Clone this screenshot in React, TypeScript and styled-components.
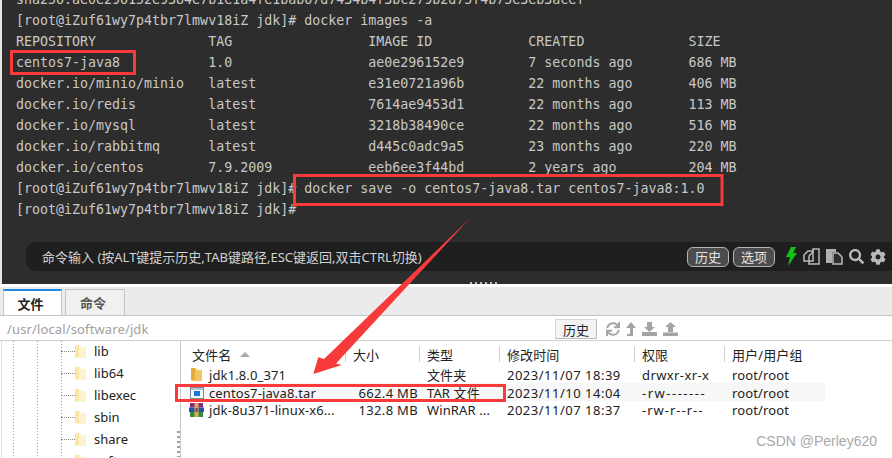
import React from "react";
import styled, { createGlobalStyle } from "styled-components";
import { FaCog, FaSearch, FaSync } from "react-icons/fa";

const Global = createGlobalStyle`
  html, body { margin: 0; padding: 0; background: #fff; }
  #root { width: 892px; height: 458px; overflow: hidden; }
`;

const UI_FONT = `"Noto Sans", "Noto Sans CJK SC", sans-serif`;

const Page = styled.div`
  position: relative;
  width: 892px;
  height: 458px;
  overflow: hidden;
  display: flex;
  flex-direction: column;
  background: #fff;
  font-family: ${UI_FONT};
`;

const Terminal = styled.section`
  height: 284px;
  flex: none;
  border-left: 2px solid #e6e6e6;
  background: #2d2d2d;
  overflow: hidden;
  position: relative;
  display: flex;
  flex-direction: column;
`;

const Output = styled.pre`
  margin: -11px 0 0 14px;
  font-family: "DejaVu Sans Mono", monospace;
  font-size: 13.3px;
  line-height: 21px;
  color: #c8c8c8;
  height: 231px;
  flex: none;
  overflow: hidden;
`;

const InputBar = styled.div`
  margin: 22px 0 0 24px;
  height: 29px;
  display: flex;
  align-items: center;
  background: #1f1f1f;
  border-radius: 10px 0 0 10px;
  padding: 0 6px 0 16px;
  color: #d2d2d2;
  font-size: 13px;
`;

const Hint = styled.span`
  flex: 1;
`;

const PillButton = styled.span`
  width: 42px;
  height: 20px;
  box-sizing: border-box;
  border: 1px solid #b5b5b5;
  border-radius: 6px;
  background: #4c4c4c;
  color: #e4e4e4;
  font-size: 13px;
  display: flex;
  align-items: center;
  justify-content: center;
  margin-left: 4px;
`;

const ToolIcons = styled.div`
  display: flex;
  align-items: center;
  gap: 6px;
  margin-left: 10px;
  color: #b9b9b9;
`;

const SplitDots = styled.div`
  position: absolute;
  left: 468px;
  bottom: 0;
  width: 30px;
  height: 2px;
  background: repeating-linear-gradient(90deg, #bdbdbd 0 2px, transparent 2px 5px);
`;

const TabStrip = styled.div`
  margin-top: 3px;
  height: 29px;
  flex: none;
  box-sizing: border-box;
  background: #ebebeb;
  border-bottom: 1px solid #c4c4c4;
  display: flex;
  align-items: flex-end;
  gap: 3px;
  padding-left: 3px;
`;

const Tab = styled.div<{ $active?: boolean }>`
  width: ${(p) => (p.$active ? 59 : 60)}px;
  height: 26px;
  box-sizing: border-box;
  display: flex;
  align-items: center;
  justify-content: center;
  padding-right: 4px;
  font-size: 13px;
  font-weight: 700;
  color: ${(p) => (p.$active ? "#222" : "#555")};
  background: ${(p) => (p.$active ? "#fff" : "#f0f0f0")};
  border: 1px solid #c4c4c4;
  border-bottom: none;
  border-top: ${(p) => (p.$active ? "2px solid #1e8ae6" : "1px solid #c4c4c4")};
`;

const PathRow = styled.div`
  height: 25px;
  flex: none;
  box-sizing: border-box;
  border-bottom: 1px solid #cfcfcf;
  display: flex;
  align-items: center;
  padding: 2px 0 0 7px;
`;

const PathText = styled.span`
  flex: none;
  width: 548px;
  color: #a0a0a0;
  font-size: 13px;
  letter-spacing: 0.13px;
`;

const HistoryButton = styled.span`
  width: 42px;
  height: 20px;
  box-sizing: border-box;
  background: #f4f4f4;
  border: 1px solid #d8d8d8;
  border-bottom-color: #bbb;
  border-right-color: #bbb;
  color: #222;
  font-size: 13px;
  display: flex;
  align-items: center;
  justify-content: center;
`;

const PathIcons = styled.div`
  display: flex;
  align-items: center;
  gap: 6px;
  margin-left: 9px;
  color: #a4a4a4;
`;

const Body = styled.div`
  flex: 1;
  display: flex;
  min-height: 0;
`;

const Tree = styled.div`
  position: relative;
  margin-left: 1px;
  width: 180px;
  flex: none;
  box-sizing: border-box;
  border-left: 1px solid #dcdcdc;
  border-right: 1px solid #c8c8c8;
  padding: 0 0 0 59px;
  overflow: hidden;
  background-image:
    repeating-linear-gradient(180deg, #9a9a9a 0 1px, transparent 1px 3px),
    repeating-linear-gradient(180deg, #9a9a9a 0 1px, transparent 1px 3px),
    repeating-linear-gradient(180deg, #9a9a9a 0 1px, transparent 1px 3px);
  background-size: 1px 100%;
  background-repeat: no-repeat;
  background-position: 11px 0, 35px 0, 59px 0;
`;

const TreeRow = styled.div`
  height: 22px;
  display: flex;
  align-items: center;
  font-size: 13px;
  color: #222;
`;

const TreeList = styled.div`
  margin-top: -1px;
`;

const Connector = styled.span`
  width: 14px;
  flex: none;
  border-top: 1px dotted #888;
`;

const TreeLabel = styled.span`
  margin-left: 8px;
`;

const Grips = styled.div`
  position: absolute;
  right: 0;
  top: 90px;
  width: 3px;
  height: 26px;
  background: repeating-linear-gradient(180deg, #a0a0a0 0 2px, transparent 2px 5px);
`;

const Files = styled.div`
  margin-left: 3px;
  width: 641px;
  font-size: 13px;
  color: #222;
  letter-spacing: 0.12px;
`;

const Grid = "161px 74px 80px 135px 90px 101px";

const HeadRow = styled.div`
  display: grid;
  grid-template-columns: ${Grid};
  height: 22px;
  margin-top: 2px;
  align-items: center;
`;

const HeadCell = styled.div<{ $first?: boolean }>`
  height: 16px;
  display: flex;
  align-items: center;
  gap: 9px;
  padding-left: ${(p) => (p.$first ? 8 : 7)}px;
  border-left: ${(p) => (p.$first ? "none" : "1px solid #cfcfcf")};
  white-space: nowrap;
`;

const SortMark = styled.span`
  width: 0;
  height: 0;
  border-left: 5px solid transparent;
  border-right: 5px solid transparent;
  border-bottom: 5px solid #aaa;
`;

const FileRow = styled.div<{ $striped?: boolean }>`
  display: grid;
  grid-template-columns: ${Grid};
  height: 18px;
  box-sizing: border-box;
  padding-bottom: 2px;
  align-items: center;
  background: ${(p) => (p.$striped ? "#f7f7f7" : "transparent")};
  white-space: nowrap;
`;

const NameCell = styled.div`
  display: flex;
  align-items: center;
  gap: 5px;
  padding-left: 5px;
`;

const IconSlot = styled.span`
  width: 15px;
  height: 14px;
  flex: none;
  display: flex;
  align-items: center;
  justify-content: center;
`;

const SizeCell = styled.div`
  text-align: right;
  padding-right: 1px;
  letter-spacing: 0.32px;
`;

const Cell = styled.div<{ $spacing?: number }>`
  padding-left: 8px;
  letter-spacing: ${(p) => p.$spacing ?? 0.12}px;
`;

const Overlay = styled.svg`
  position: absolute;
  left: 0;
  top: 0;
  pointer-events: none;
`;

const Watermark = styled.div`
  position: absolute;
  right: 15px;
  bottom: 9px;
  font-family: "Liberation Sans", sans-serif;
  font-size: 14px;
  color: #a8a8a8;
`;

const OUTPUT = `sha256:ae0e296152e9384e7b1e1a4fe1bab67d7434b4f3bc279b2d75f4b75e3eb3acef
[root@iZuf61wy7p4tbr7lmwv18iZ jdk]# docker images -a
REPOSITORY              TAG                 IMAGE ID            CREATED             SIZE
centos7-java8           1.0                 ae0e296152e9        7 seconds ago       686 MB
docker.io/minio/minio   latest              e31e0721a96b        22 months ago       406 MB
docker.io/redis         latest              7614ae9453d1        22 months ago       113 MB
docker.io/mysql         latest              3218b38490ce        22 months ago       516 MB
docker.io/rabbitmq      latest              d445c0adc9a5        23 months ago       220 MB
docker.io/centos        7.9.2009            eeb6ee3f44bd        2 years ago         204 MB
[root@iZuf61wy7p4tbr7lmwv18iZ jdk]# docker save -o centos7-java8.tar centos7-java8:1.0
[root@iZuf61wy7p4tbr7lmwv18iZ jdk]#`;

const Folder = ({ pale }: { pale?: boolean }) => (
  <svg width="11" height="15" viewBox="0 0 11 15">
    <path d="M0 1h5l1 2h5v11H1l-1-1z" fill={pale ? "#fdf3cf" : "#f2c763"} />
    <path d="M0 1h4v12H0z" fill={pale ? "#f9e6a8" : "#e5ac3a"} />
  </svg>
);

const TarIcon = () => (
  <svg width="14" height="12" viewBox="0 0 14 12">
    <rect x=".5" y=".5" width="13" height="11" fill="#f4f6f8" stroke="#7e8b97" />
    <rect x="1" y="1" width="12" height="2" fill="#b9c3cc" />
    <rect x="4" y="4" width="6" height="5" fill="#1677dd" />
  </svg>
);

const RarIcon = () => (
  <svg width="15" height="14" viewBox="0 0 15 14">
    <rect x="1" y="0" width="13" height="4.5" fill="#8c2a7a" />
    <rect x="0" y="4.5" width="15" height="4.5" fill="#2a4fa8" />
    <rect x="1" y="9" width="13" height="5" fill="#2f8f3a" />
    <rect x="5.5" y="0" width="4" height="14" fill="#d8a860" />
    <rect x="6.5" y="5" width="2" height="4" fill="#7a4a20" />
  </svg>
);

const Bolt = () => (
  <svg width="12" height="19" viewBox="0 0 12 19">
    <path d="M6 0h5L8 6h4L3 19l2-9H1z" fill="#14c414" />
  </svg>
);

const CopyIcon = () => (
  <svg width="17" height="17" viewBox="0 0 17 17" fill="none" stroke="#b9b9b9" strokeWidth="1.5">
    <path d="M1 7l4-4h5v10H1z" />
    <path d="M6 8l4-4V1h6v15H6z" />
  </svg>
);

const PasteIcon = () => (
  <svg width="17" height="17" viewBox="0 0 17 17">
    <path d="M0 1h10v3H6v11H0z" fill="#b0b0b0" />
    <path d="M7 5h5l4 4v7H7z" fill="#2d2d2d" stroke="#b9b9b9" strokeWidth="1.5" />
  </svg>
);

const UpArrow = () => (
  <svg width="10" height="14" viewBox="0 0 10 14">
    <path d="M5 0l5 6H7v8H1v-2h3V6H0z" fill="#a4a4a4" />
  </svg>
);

const TrayDown = () => (
  <svg width="15" height="14" viewBox="0 0 15 14">
    <path d="M5 0h5v5h3l-5.5 5L2 5h3z" fill="#a4a4a4" />
    <rect x="0" y="10" width="15" height="4" fill="#a4a4a4" />
  </svg>
);

const TrayUp = () => (
  <svg width="15" height="14" viewBox="0 0 15 14">
    <path d="M7.5 0L13 5h-3v5H5V5H2z" fill="#a4a4a4" />
    <rect x="0" y="10.5" width="15" height="3.5" fill="#a4a4a4" />
  </svg>
);

const treeItems = ["lib", "lib64", "libexec", "sbin", "share", "soft"];

export default function App() {
  return (
    <Page>
      <Global />
      <Terminal>
        <Output>{OUTPUT}</Output>
        <InputBar>
          <Hint>命令输入 (按ALT键提示历史,TAB键路径,ESC键返回,双击CTRL切换)</Hint>
          <PillButton>历史</PillButton>
          <PillButton>选项</PillButton>
          <ToolIcons>
            <Bolt />
            <CopyIcon />
            <PasteIcon />
            <FaSearch size={15} />
            <FaCog size={16} />
          </ToolIcons>
        </InputBar>
        <SplitDots />
      </Terminal>
      <TabStrip>
        <Tab $active>文件</Tab>
        <Tab>命令</Tab>
      </TabStrip>
      <PathRow>
        <PathText>/usr/local/software/jdk</PathText>
        <HistoryButton>历史</HistoryButton>
        <PathIcons>
          <FaSync size={14} />
          <UpArrow />
          <TrayDown />
          <TrayUp />
        </PathIcons>
      </PathRow>
      <Body>
        <Tree>
          <TreeList>
            {treeItems.map((t) => (
              <TreeRow key={t}>
                <Connector />
                <Folder pale />
                <TreeLabel>{t}</TreeLabel>
              </TreeRow>
            ))}
          </TreeList>
          <Grips />
        </Tree>
        <Files>
          <HeadRow>
            <HeadCell $first>
              文件名
              <SortMark />
            </HeadCell>
            <HeadCell>大小</HeadCell>
            <HeadCell>类型</HeadCell>
            <HeadCell>修改时间</HeadCell>
            <HeadCell>权限</HeadCell>
            <HeadCell>用户/用户组</HeadCell>
          </HeadRow>
          <FileRow>
            <NameCell>
              <IconSlot>
                <Folder />
              </IconSlot>
              jdk1.8.0_371
            </NameCell>
            <SizeCell />
            <Cell>文件夹</Cell>
            <Cell $spacing={0.5}>2023/11/07 18:39</Cell>
            <Cell $spacing={0.4}>drwxr-xr-x</Cell>
            <Cell>root/root</Cell>
          </FileRow>
          <FileRow $striped>
            <NameCell>
              <IconSlot>
                <TarIcon />
              </IconSlot>
              centos7-java8.tar
            </NameCell>
            <SizeCell>662.4 MB</SizeCell>
            <Cell>TAR 文件</Cell>
            <Cell $spacing={0.5}>2023/11/10 14:04</Cell>
            <Cell $spacing={1.5}>-rw-------</Cell>
            <Cell>root/root</Cell>
          </FileRow>
          <FileRow>
            <NameCell>
              <IconSlot>
                <RarIcon />
              </IconSlot>
              jdk-8u371-linux-x6...
            </NameCell>
            <SizeCell>132.8 MB</SizeCell>
            <Cell>WinRAR ...</Cell>
            <Cell $spacing={0.5}>2023/11/07 18:37</Cell>
            <Cell $spacing={1}>-rw-r--r--</Cell>
            <Cell>root/root</Cell>
          </FileRow>
        </Files>
      </Body>
      <Overlay width="892" height="458" viewBox="0 0 892 458">
        <g fill="none" stroke="#f93a3a" strokeWidth="3">
          <rect x="11.5" y="51.5" width="123" height="22" />
          <rect x="294.5" y="175.5" width="427.5" height="29" />
          <rect x="176.5" y="385.5" width="328" height="15" />
        </g>
        <path d="M470 218.3 L336 363.4 L341.7 365 L313.3 374 L318.3 357.3 L324 359 Z" fill="#f93a3a" />
      </Overlay>
      <Watermark>CSDN @Perley620</Watermark>
    </Page>
  );
}
